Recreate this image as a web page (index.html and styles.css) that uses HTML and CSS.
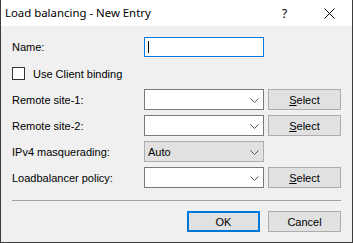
FILE: index.html
```html
<!DOCTYPE html>
<html>
<head>
<meta charset="utf-8" />
<title>Load balancing - New Entry</title>
<link rel="stylesheet" href="styles.css">
</head>
<body>
<div class="dialog">
  <div class="titlebar">
    <span class="title">Load balancing - New Entry</span>
    <span class="help">?</span>
    <svg class="close" width="11" height="11" viewBox="0 0 11 11"><path d="M0.5 0.5 L10.5 10.5 M10.5 0.5 L0.5 10.5" stroke="#000" stroke-width="1" fill="none"/></svg>
  </div>
  <div class="content">
    <div class="row name-row">
      <label class="lbl">Name:</label>
      <div class="textbox focused"><span class="caret"></span></div>
    </div>
    <div class="row check-row">
      <span class="checkbox"></span>
      <span class="check-lbl">Use Client binding</span>
    </div>
    <div class="row">
      <label class="lbl">Remote site-1:</label>
      <div class="combo"><svg class="chev" width="9" height="5" viewBox="0 0 9 5"><path d="M0.5 0.5 L4.5 4.5 L8.5 0.5" stroke="#555" fill="none"/></svg></div>
      <button class="btn"><u>S</u>elect</button>
    </div>
    <div class="row">
      <label class="lbl">Remote site-2:</label>
      <div class="combo"><svg class="chev" width="9" height="5" viewBox="0 0 9 5"><path d="M0.5 0.5 L4.5 4.5 L8.5 0.5" stroke="#555" fill="none"/></svg></div>
      <button class="btn"><u>S</u>elect</button>
    </div>
    <div class="row">
      <label class="lbl">IPv4 masquerading:</label>
      <div class="combo dropdown"><span class="val">Auto</span><svg class="chev" width="9" height="5" viewBox="0 0 9 5"><path d="M0.5 0.5 L4.5 4.5 L8.5 0.5" stroke="#555" fill="none"/></svg></div>
    </div>
    <div class="row">
      <label class="lbl">Loadbalancer policy:</label>
      <div class="combo"><svg class="chev" width="9" height="5" viewBox="0 0 9 5"><path d="M0.5 0.5 L4.5 4.5 L8.5 0.5" stroke="#555" fill="none"/></svg></div>
      <button class="btn"><u>S</u>elect</button>
    </div>
    <div class="separator"></div>
    <div class="buttons">
      <button class="btn default">OK</button>
      <button class="btn">Cancel</button>
    </div>
  </div>
</div>
</body>
</html>
```
FILE: styles.css
```css
html, body {
  margin: 0; padding: 0;
  background: #f0f0f0;
}
.dialog {
  width: 353px;
  height: 243px;
  box-sizing: border-box;
  border: 1px solid #3c3c3c;
  border-top: none;
  display: flex;
  flex-direction: column;
  font-family: "Liberation Sans", Arial, sans-serif;
  font-size: 11px;
  color: #000;
}
.titlebar {
  height: 26px;
  background: #fff;
  display: flex;
  align-items: center;
  position: relative;
  flex-shrink: 0;
}
.title {
  font-family: "Noto Sans", sans-serif;
  font-size: 11.4px;
  margin-left: 4px;
  margin-top: -1px;
}
.help {
  position: absolute;
  left: 281px;
  top: 5px;
  font-family: "Noto Sans", sans-serif;
  font-size: 12px;
}
.close {
  position: absolute;
  left: 323px;
  top: 8px;
}
.content {
  flex: 1;
  background: #f0f0f0;
  padding: 11px 11px 0 11px;
}
.row {
  display: grid;
  grid-template-columns: 128px 120px 73px;
  column-gap: 4px;
  height: 21px;
  align-items: center;
  margin-top: 5px;
}
.name-row {
  margin-top: 0;
  height: 20px;
}
.check-row {
  display: flex;
  height: 13px;
  margin-top: 10px;
  margin-bottom: 9px;
}
.textbox {
  height: 20px;
  box-sizing: border-box;
  border: 1px solid #7a7a7a;
  background: #fff;
  position: relative;
}
.textbox.focused {
  border-color: #0078d7;
}
.caret {
  position: absolute;
  left: 3px;
  top: 3px;
  width: 1px;
  height: 12px;
  background: #000;
}
.checkbox {
  width: 13px;
  height: 13px;
  box-sizing: border-box;
  border: 1px solid #333;
  background: #fff;
}
.check-lbl {
  margin-left: 4px;
}
.combo {
  height: 21px;
  box-sizing: border-box;
  border: 1px solid #7a7a7a;
  background: #fff;
  display: flex;
  align-items: center;
  justify-content: flex-end;
  padding-right: 4px;
}
.combo.dropdown {
  background: #e1e1e1;
  border-color: #adadad;
  justify-content: space-between;
}
.combo .val {
  padding-left: 3px;
}
.chev {
  margin-top: 1px;
}
.btn {
  height: 21px;
  width: 73px;
  box-sizing: border-box;
  border: 1px solid #adadad;
  background: #e1e1e1;
  font-family: "Liberation Sans", Arial, sans-serif;
  font-size: 11px;
  color: #000;
  padding: 0;
}
.btn.default {
  border: 2px solid #0078d7;
}
.separator {
  height: 1px;
  background: #a0a0a0;
  margin-top: 12px;
}
.buttons {
  display: flex;
  justify-content: flex-end;
  gap: 8px;
  margin-top: 10px;
}
```
